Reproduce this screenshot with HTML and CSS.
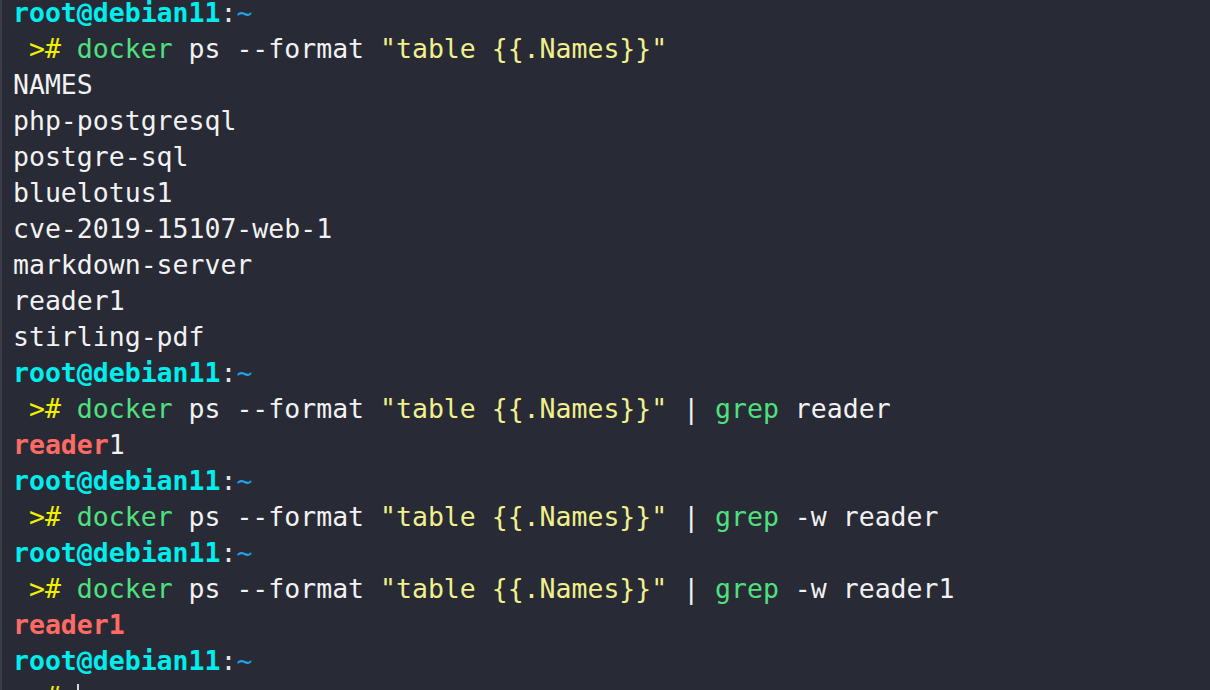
FILE: index.html
```html
<!DOCTYPE html>
<html>
<head>
<meta charset="utf-8">
<link rel="stylesheet" href="styles.css">
<title>Terminal</title>
</head>
<body>
<div class="term">
<div class="screen">
<div class="line"><span class="host">root@debian11</span><span class="colon">:</span><span class="dir">~</span></div>
<div class="line"> <span class="ps">&gt;#</span> <span class="cmd">docker</span> ps --format <span class="str">"table {{.Names}}"</span></div>
<div class="line">NAMES</div>
<div class="line">php-postgresql</div>
<div class="line">postgre-sql</div>
<div class="line">bluelotus1</div>
<div class="line">cve-2019-15107-web-1</div>
<div class="line">markdown-server</div>
<div class="line">reader1</div>
<div class="line">stirling-pdf</div>
<div class="line"><span class="host">root@debian11</span><span class="colon">:</span><span class="dir">~</span></div>
<div class="line"> <span class="ps">&gt;#</span> <span class="cmd">docker</span> ps --format <span class="str">"table {{.Names}}"</span> | <span class="cmd">grep</span> reader</div>
<div class="line"><span class="match">reader</span>1</div>
<div class="line"><span class="host">root@debian11</span><span class="colon">:</span><span class="dir">~</span></div>
<div class="line"> <span class="ps">&gt;#</span> <span class="cmd">docker</span> ps --format <span class="str">"table {{.Names}}"</span> | <span class="cmd">grep</span> -w reader</div>
<div class="line"><span class="host">root@debian11</span><span class="colon">:</span><span class="dir">~</span></div>
<div class="line"> <span class="ps">&gt;#</span> <span class="cmd">docker</span> ps --format <span class="str">"table {{.Names}}"</span> | <span class="cmd">grep</span> -w reader1</div>
<div class="line"><span class="match">reader1</span></div>
<div class="line"><span class="host">root@debian11</span><span class="colon">:</span><span class="dir">~</span></div>
<div class="line"> <span class="ps">&gt;#</span> <span class="cursor"></span></div>
</div>
</div>
</body>
</html>
```

FILE: styles.css
```css
html, body {
  margin: 0;
  padding: 0;
  background: #282a36;
  overflow: hidden;
}
.term {
  width: 1210px;
  height: 690px;
  overflow: hidden;
  background: #282a36;
  border-left: 2px solid #3a3c49;
  box-sizing: border-box;
}
.screen {
  margin-top: -5px;
  padding-left: 11px;
  font-family: "DejaVu Sans Mono", "Liberation Mono", monospace;
  font-size: 26.5px;
  color: #f2f2f2;
}
.line {
  height: 36px;
  line-height: 36px;
  white-space: pre;
}
.host {
  color: #00eeee;
  font-weight: bold;
}
.colon {
  color: #e6e6e6;
}
.dir {
  color: #1fa3e8;
}
.ps {
  color: #f0f000;
}
.cmd {
  color: #4fe07f;
}
.str {
  color: #f1f08c;
}
.match {
  color: #ff6a63;
  font-weight: bold;
}
.cursor {
  display: inline-block;
  width: 2px;
  height: 30px;
  background: #d8d8d8;
  vertical-align: middle;
}
```
